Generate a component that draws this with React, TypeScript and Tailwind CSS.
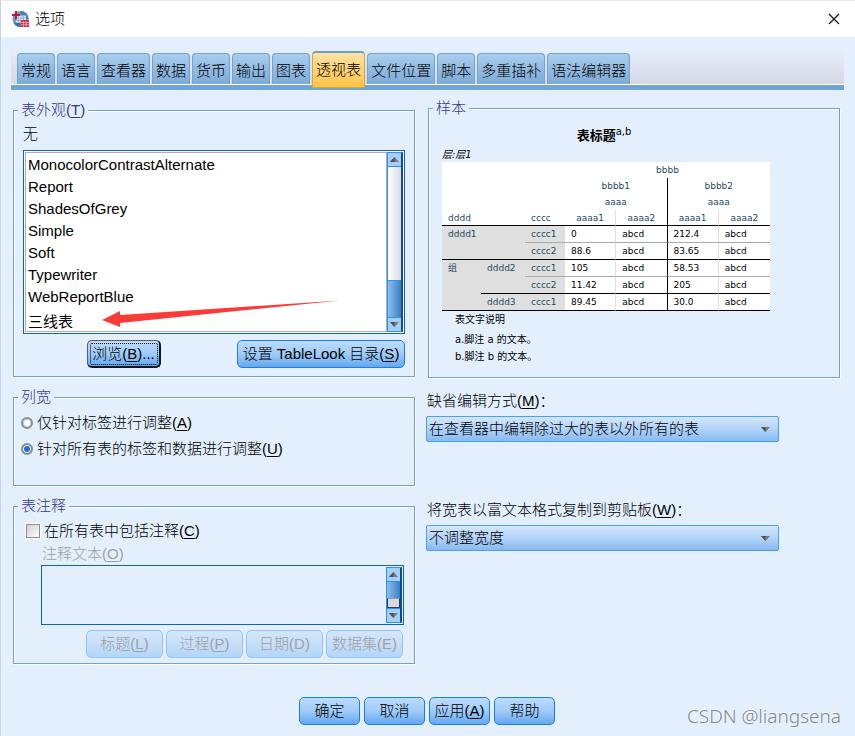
import { useState } from 'react';
import type { ReactNode } from 'react';
import clsx from 'clsx';

const TABS = [
  '常规',
  '语言',
  '查看器',
  '数据',
  '货币',
  '输出',
  '图表',
  '透视表',
  '文件位置',
  '脚本',
  '多重插补',
  '语法编辑器',
];

const LOOKS = [
  'MonocolorContrastAlternate',
  'Report',
  'ShadesOfGrey',
  'Simple',
  'Soft',
  'Typewriter',
  'WebReportBlue',
  '三线表',
];

const Key = ({ children }: { children: string }) => (
  <>
    (<span className="underline underline-offset-2">{children}</span>)
  </>
);

function AppIcon() {
  return (
    <svg width="18" height="18" viewBox="0 0 18 18" className="shrink-0">
      <circle cx="9.500" cy="9" r="8" fill="#6c9fce" />
      <path d="M9.500 1a8 8 0 0 1 8 8h-8z" fill="#4a80b6" />
      <path d="M5 5.500h10v7H5z" fill="#dcebf7" />
      <path d="M5 8h10M5 10.500h10M7.500 5.500v7M10 5.500v7M12.500 5.500v7" stroke="#7aa8d4" strokeWidth="0.8" />
      <path d="M2.500 13c2 3 5 4 7 4v-4z" fill="#3d6f9f" />
      <path d="M4 1h2v3h3v2H6v3.500H4V6H1V4h3z" fill="#cf1035" />
      <path d="M10 10h8v7h-8z" fill="#d42a48" />
      <path d="M10 12.500h8M10 14.700h8M12.500 11v6M15.200 11v6" stroke="#f3b6c0" strokeWidth="0.7" />
    </svg>
  );
}

const Triangle = ({ up }: { up?: boolean }) => (
  <svg width="9" height="5" viewBox="0 0 9 5">
    <path d={up ? 'M0 5h9L4.500 0z' : 'M0 0h9L4.500 5z'} fill="#7b7b7b" />
    <path d={up ? 'M0 5h4.500V0z' : 'M0 0h4.500v5z'} fill="#4f4f4f" />
  </svg>
);

function ScrollBar({ children }: { children: ReactNode }) {
  return (
    <div className="flex w-4 shrink-0 flex-col border border-r-2 border-[#2a93f5] border-r-[#0d4f93]">
      <span className="flex h-[14px] shrink-0 items-center justify-center border-b border-[#2a93f5] bg-[#a5cefb]">
        <Triangle up />
      </span>
      {children}
      <span className="flex h-[14px] shrink-0 items-center justify-center border-t border-[#2a93f5] bg-[#a5cefb]">
        <Triangle />
      </span>
    </div>
  );
}

function Group({ title, className, children }: { title: ReactNode; className?: string; children: ReactNode }) {
  return (
    <fieldset className="min-w-0 border border-[#6fa1d3] shadow-[1px_1px_0_#fff,inset_1px_1px_0_#fff]">
      <legend className="ml-1 bg-[#e3effc] px-[3px] leading-5 text-[#333a94]">{title}</legend>
      <div className={className}>{children}</div>
    </fieldset>
  );
}

function Button({ className, children, ...rest }: React.ComponentProps<'button'>) {
  return (
    <button
      type="button"
      className={clsx(
        'h-7 whitespace-nowrap rounded-[5px] border bg-linear-to-b from-[#bcdbfd] via-[#a0cbf8] to-[#62a7ef] leading-5',
        'disabled:border-[#93c4f2] disabled:from-[#d3e6fc] disabled:via-[#c6dffa] disabled:to-[#b1d5f8] disabled:text-[#a0a0a0]',
        className
      )}
      {...rest}
    >
      {children}
    </button>
  );
}

function Dropdown({ id, label, option }: { id: string; label: ReactNode; option: string }) {
  return (
    <div className="mr-[61px]">
      <label htmlFor={id} className="block pl-px leading-5">
        {label}
      </label>
      <div className="relative mt-[5px]">
        <select
          id={id}
          className="block h-[26px] w-full appearance-none rounded-[2px] border border-[#4a9fee] bg-linear-to-b from-[#d3e6fc] via-[#b3d3f8] to-[#86baf0] pl-[2px] leading-5"
        >
          <option>{option}</option>
        </select>
        <span className="pointer-events-none absolute inset-y-0 right-[9px] flex items-center">
          <Triangle />
        </span>
      </div>
    </div>
  );
}

const HEAD = 'h-4 p-0 font-normal leading-3';
const STUB = 'bg-[#dfdfdf] p-0 pl-[6px] pt-[2px] text-left align-top font-normal leading-3 text-[#264a60]';
const GREY = 'border-b border-[#aaaaaa]';
const BLACK = 'border-b border-black';

function DataCells({ values, line }: { values: string[]; line: string }) {
  return (
    <>
      {values.map((value, i) => (
        <td
          key={i}
          className={clsx(
            'h-[17px] bg-white p-0 pl-[6px] leading-3',
            line,
            i === 1 && 'border-r border-r-black',
            i % 2 === 0 && 'border-r border-r-[#e0e0e0]'
          )}
        >
          {value}
        </td>
      ))}
    </>
  );
}

function SampleTable() {
  return (
    <table className="w-[328px] table-fixed border-separate border-spacing-0 text-[9px]">
      <colgroup>
        <col className="w-[39px]" />
        <col className="w-[44px]" />
        <col className="w-10" />
        <col />
        <col />
        <col />
        <col />
      </colgroup>
      <thead className="bg-white text-[#264a60]">
        <tr>
          <th colSpan={3} className={HEAD} />
          <th colSpan={4} className={HEAD}>bbbb</th>
        </tr>
        <tr>
          <th colSpan={3} className={HEAD} />
          <th colSpan={2} className={clsx(HEAD, 'border-r border-black')}>bbbb1</th>
          <th colSpan={2} className={HEAD}>bbbb2</th>
        </tr>
        <tr>
          <th colSpan={3} className={HEAD} />
          <th colSpan={2} className={clsx(HEAD, 'border-r border-black')}>aaaa</th>
          <th colSpan={2} className={HEAD}>aaaa</th>
        </tr>
        <tr>
          <th colSpan={2} className={clsx(HEAD, BLACK, 'pl-[6px] text-left')}>dddd</th>
          <th className={clsx(HEAD, BLACK, 'pl-[6px] text-left')}>cccc</th>
          <th className={clsx(HEAD, BLACK, 'border-r border-r-[#e0e0e0]')}>aaaa1</th>
          <th className={clsx(HEAD, BLACK, 'border-r border-r-black')}>aaaa2</th>
          <th className={clsx(HEAD, BLACK, 'border-r border-r-[#e0e0e0]')}>aaaa1</th>
          <th className={clsx(HEAD, BLACK)}>aaaa2</th>
        </tr>
      </thead>
      <tbody>
        <tr>
          <th colSpan={2} rowSpan={2} className={clsx(STUB, BLACK)}>dddd1</th>
          <th className={clsx(STUB, GREY)}>cccc1</th>
          <DataCells values={['0', 'abcd', '212.4', 'abcd']} line={GREY} />
        </tr>
        <tr>
          <th className={clsx(STUB, BLACK)}>cccc2</th>
          <DataCells values={['88.6', 'abcd', '83.65', 'abcd']} line={BLACK} />
        </tr>
        <tr>
          <th rowSpan={3} className={clsx(STUB, BLACK)}>组</th>
          <th rowSpan={2} className={clsx(STUB, BLACK)}>dddd2</th>
          <th className={clsx(STUB, GREY)}>cccc1</th>
          <DataCells values={['105', 'abcd', '58.53', 'abcd']} line={GREY} />
        </tr>
        <tr>
          <th className={clsx(STUB, BLACK)}>cccc2</th>
          <DataCells values={['11.42', 'abcd', '205', 'abcd']} line={BLACK} />
        </tr>
        <tr>
          <th className={clsx(STUB, BLACK)}>dddd3</th>
          <th className={clsx(STUB, BLACK)}>cccc1</th>
          <DataCells values={['89.45', 'abcd', '30.0', 'abcd']} line={BLACK} />
        </tr>
      </tbody>
    </table>
  );
}

export default function App() {
  const [tab, setTab] = useState('透视表');
  const [width, setWidth] = useState('all');
  const [comment, setComment] = useState(false);

  const radio =
    'm-0 size-3 appearance-none rounded-full border-2 border-[#8b8f94] bg-white shadow-[inset_0_0_0_1px_#bcd6ee] checked:bg-[#1d6fd0] checked:shadow-[inset_0_0_0_1px_#fff]';

  return (
    <div className="relative flex min-h-screen flex-col border-l border-t border-l-[#c3d5ee] border-t-[#e6e9f0] bg-[#e3effc] font-['Liberation_Sans','Noto_Sans_CJK_SC',sans-serif] text-[15px] font-light text-black">
      <header className="flex h-9 items-center bg-white pl-[10px] pr-[15px]">
        <AppIcon />
        <h1 className="ml-[6px] flex-1 leading-5">选项</h1>
        <button type="button" aria-label="关闭">
          <svg width="12" height="12" viewBox="0 0 12 12" stroke="#111" strokeWidth="1.200">
            <path d="M1 1l10 10M11 1L1 11" />
          </svg>
        </button>
      </header>

      <nav className="ml-[10px] mr-[11px] mt-3 flex h-[41px] items-end gap-[2px] border-b-[5px] border-[#71a3d4] bg-linear-to-b from-[#e3effc] to-[#d8d7e4] pl-[6px] shadow-[inset_0_-1px_0_#fff]">
        {TABS.map((name) => (
          <button
            key={name}
            type="button"
            onClick={() => setTab(name)}
            className={clsx(
              'whitespace-nowrap rounded-t-[4px] border px-[3px] leading-5',
              name === tab
                ? 'relative -mb-[3px] h-[37px] border-t-2 border-[#dba437] border-t-[#6b9fd3] bg-linear-to-b from-[#fee2a0] to-[#ffc443]'
                : 'mb-px h-[31px] border-b-0 border-[#71a3d4] bg-linear-to-b from-[#a9cdec] to-[#7caad7] pt-1'
            )}
          >
            {name}
          </button>
        ))}
      </nav>

      <main className="grid grid-cols-[402fr_414fr] gap-x-[11px] pl-3 pr-[15px] pt-[10px]">
        <div className="flex flex-col gap-[10px]">
          <Group title={<>表外观<Key>T</Key></>} className="px-[9px] pb-2 pt-1">
            <label htmlFor="looks" className="block leading-5">
              无
            </label>
            <div className="relative mt-[6px] flex border border-[#1064b8] bg-white p-px">
              <select
                id="looks"
                size={8}
                className="h-[180px] min-w-0 flex-1 appearance-none overflow-hidden border border-[#b0b0b0] bg-white px-0 py-[3px]"
              >
                {LOOKS.map((look) => (
                  <option key={look} className="h-[22px] px-[2px] py-0 leading-[22px]">
                    {look}
                  </option>
                ))}
              </select>
              <ScrollBar>
                <span className="flex-1 bg-linear-to-r from-white to-[#d9dbe6]" />
                <span className="h-[37px] border-t border-[#2a93f5] bg-linear-to-r from-[#8cbfec] to-[#3a80c4]" />
              </ScrollBar>
              <svg
                width="238"
                height="28"
                viewBox="0 0 238 28"
                className="pointer-events-none absolute bottom-[5px] left-[78px]"
              >
                <path d="M0 20L18 11V15L238 0.500L18 23V27z" fill="#fb3b38" />
              </svg>
            </div>
            <div className="mt-[6px] flex justify-between pl-16">
              <Button className="w-[74px] border-b-2 border-r-2 border-b-[#101820] border-l-[#555c66] border-r-[#101820] border-t-[#555c66] outline-1 -outline-offset-4 outline-dotted outline-black">
                浏览<Key>B</Key>...
              </Button>
              <Button className="w-[168px] border-[#1a80dd]">
                设置 TableLook 目录<Key>S</Key>
              </Button>
            </div>
          </Group>

          <Group title="列宽" className="px-[7px] pb-[26px]">
            <div className="flex flex-col gap-[6px] pt-[6px]">
              <label className="flex items-center gap-1 leading-5">
                <input
                  type="radio"
                  name="width"
                  checked={width === 'labels'}
                  onChange={() => setWidth('labels')}
                  className={radio}
                />
                <span>仅针对标签进行调整<Key>A</Key></span>
              </label>
              <label className="flex items-center gap-1 leading-5">
                <input
                  type="radio"
                  name="width"
                  checked={width === 'all'}
                  onChange={() => setWidth('all')}
                  className={radio}
                />
                <span>针对所有表的标签和数据进行调整<Key>U</Key></span>
              </label>
            </div>
          </Group>

          <Group title="表注释" className="pb-[5px] pl-3 pr-[10px] pt-[5px]">
            <label className="flex items-center gap-1 leading-5">
              <input
                type="checkbox"
                checked={comment}
                onChange={(e) => setComment(e.target.checked)}
                className="m-0 size-[14px] appearance-none border border-[#8b8f94] bg-linear-to-br from-[#d0d0d0] to-white shadow-[0_0_0_1px_#fff] checked:bg-[#1d6fd0]"
              />
              <span>在所有表中包括注释<Key>C</Key></span>
            </label>
            <label htmlFor="comment" className="mt-[3px] block pl-4 leading-5 text-[#a0a0a0]">
              注释文本<Key>O</Key>
            </label>
            <div className="ml-[15px] mt-px flex h-[60px] border border-[#1064b8] p-px">
              <textarea id="comment" disabled={!comment} className="min-w-0 flex-1 resize-none bg-transparent" />
              <ScrollBar>
                <span className="flex-1 bg-linear-to-r from-[#8cbfec] to-[#3a80c4]" />
                <span className="h-[10px] border border-[#333a4c] border-t-[#8f959c] bg-[#d8d8e2]" />
              </ScrollBar>
            </div>
            <div className="mt-[5px] flex justify-end gap-[3px] pr-px">
              <Button disabled={!comment} className="w-[77px]">标题<Key>L</Key></Button>
              <Button disabled={!comment} className="w-[77px]">过程<Key>P</Key></Button>
              <Button disabled={!comment} className="w-[77px]">日期(D)</Button>
              <Button disabled={!comment} className="w-[77px]">数据集(E)</Button>
            </div>
          </Group>
        </div>

        <div className="-mt-[2px] flex flex-col">
          <div className="pl-[2px]">
            <Group title="样本" className="pb-3 pl-[13px] pt-2">
              <div className="w-[328px] font-['DejaVu_Sans','Noto_Sans_CJK_SC',sans-serif] font-normal">
                <h2 className="pr-1 text-center text-[13px] font-bold leading-5">
                  表标题<sup className="text-[10px] font-normal">a,b</sup>
                </h2>
                <p className="mt-[2px] text-[10px] italic leading-[14px]">层:层1</p>
                <SampleTable />
                <div className="pl-[13px] text-[10px] leading-[17px]">
                  <p className="mb-[3px]">表文字说明</p>
                  <p>a.脚注 a 的文本。</p>
                  <p>b.脚注 b 的文本。</p>
                </div>
              </div>
            </Group>
          </div>
          <div className="mt-[13px] flex flex-col gap-[58px]">
            <Dropdown
              id="edit-mode"
              label={<>缺省编辑方式<Key>M</Key>：</>}
              option="在查看器中编辑除过大的表以外所有的表"
            />
            <Dropdown
              id="copy-width"
              label={<>将宽表以富文本格式复制到剪贴板<Key>W</Key>：</>}
              option="不调整宽度"
            />
          </div>
        </div>
      </main>

      <footer className="flex justify-center gap-1 pb-[10px] pr-[2px] pt-[33px]">
        <Button className="w-[61px] border-[#1a80dd]">确定</Button>
        <Button className="w-[61px] border-[#1a80dd]">取消</Button>
        <Button className="w-[61px] border-[#1a80dd]">应用<Key>A</Key></Button>
        <Button className="w-[61px] border-[#1a80dd]">帮助</Button>
      </footer>

      <span className="absolute bottom-2 right-[14px] font-['Noto_Sans',sans-serif] text-[19px] leading-6 text-[#7f8790] [text-shadow:-1px_-1px_0_#f4f8fd]">
        CSDN @liangsena
      </span>
    </div>
  );
}
